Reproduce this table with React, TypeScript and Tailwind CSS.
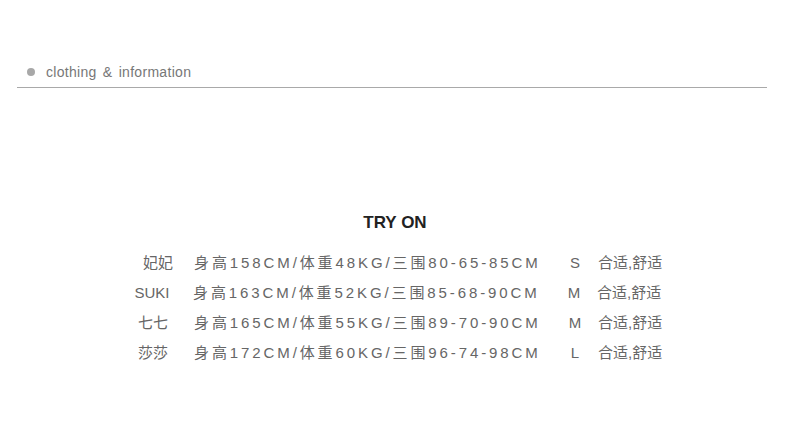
import React from "react";

const rows = [
  { name: "妃妃", nameCls: "w-[44px] ml-[136px] text-center", detail: "身高158CM/体重48KG/三围80-65-85CM", size: "S" },
  { name: "SUKI", nameCls: "w-[44px] ml-[130px] text-center", detail: "身高163CM/体重52KG/三围85-68-90CM", size: "M" },
  { name: "七七", nameCls: "w-[44px] ml-[131px] text-center", detail: "身高165CM/体重55KG/三围89-70-90CM", size: "M" },
  { name: "莎莎", nameCls: "w-[44px] ml-[131px] text-center", detail: "身高172CM/体重60KG/三围96-74-98CM", size: "L" },
];

export default function App() {
  return (
    <div
      className="w-[790px] h-[437px] bg-white overflow-hidden"
      style={{ fontFamily: '"Liberation Sans", "Noto Sans CJK SC", sans-serif' }}
    >
      <div className="pt-[62px] pl-[17px] pr-[23px]">
        <div className="flex items-center h-[20px] pl-[10px] gap-[11px]">
          <span className="w-[8px] h-[8px] rounded-full bg-[#a8a8a8]" />
          <span className="text-[14px] leading-[20px] text-[#777] tracking-[0.3px] [word-spacing:2px]">
            clothing &amp; information
          </span>
        </div>
        <div className="mt-[5px] h-px bg-[#a9a9a9]" />
      </div>

      <div className="mt-[123px] h-[24px] text-center text-[17px] leading-[24px] font-semibold text-[#222]">
        TRY ON
      </div>

      <div className="mt-[13px]">
        {rows.map((r) => (
          <div key={r.name} className="flex items-center h-[30px] text-[15px] text-[#666]">
            <div className={r.nameCls}>{r.name}</div>
            <div className={r.name === "妃妃" ? "w-[366px] ml-[14px] tracking-[2.9px] whitespace-nowrap" : "w-[366px] ml-[19px] tracking-[2.9px] whitespace-nowrap"}>
              {r.detail}
            </div>
            <div className="w-[30px] text-center">{r.size}</div>
            <div className="ml-[8px]">合适,舒适</div>
          </div>
        ))}
      </div>
    </div>
  );
}
